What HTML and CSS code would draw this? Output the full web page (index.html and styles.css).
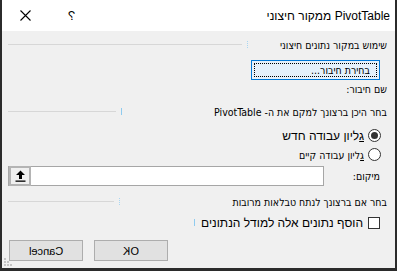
FILE: index.html
```html
<!DOCTYPE html>
<html lang="he" dir="rtl">
  <head>
    <meta charset="utf-8">
    <link rel="stylesheet" href="styles.css">
  </head>
  <body>
    <div class="window">
      <div class="titlebar">
        <span class="title">PivotTable ממקור חיצוני</span>
        <div class="title-btns">
          <span class="help">?</span>
          <svg class="close" width="11" height="11" viewBox="0 0 11 11">
            <path d="M0.5 0.5 L10.5 10.5 M10.5 0.5 L0.5 10.5" stroke="#000" stroke-width="1.1" fill="none"/>
          </svg>
        </div>
      </div>

      <div class="content">
        <div class="group">
          <div class="group-label g1"><span>שימוש במקור נתונים חיצוני</span><i class="tick dots"></i></div>
          <div class="rule"></div>
        </div>

        <div class="conn-row">
          <button class="conn-btn"><span class="focus">בחירת חיבור...</span></button>
        </div>

        <div class="conn-name">שם חיבור:</div>

        <div class="group g2-row">
          <div class="group-label g2"><span>בחר היכן ברצונך למקם את ה- PivotTable</span><i class="tick"></i></div>
          <div class="rule"></div>
        </div>

        <div class="radio-row big">
          <span class="radio checked"></span>
          <span><u>ג</u>ליון עבודה חדש</span>
        </div>
        <div class="radio-row small">
          <span class="radio"></span>
          <span><u>ג</u>ליון עבודה קיים</span>
        </div>

        <div class="loc-row">
          <span class="loc-label">מיקום:</span>
          <div class="loc-input">
            <div class="loc-btn">
              <svg width="11" height="12" viewBox="0 0 11 12">
                <path d="M5.5 0.5 L10 5 L7 5 L7 9 L4 9 L4 5 L1 5 Z" fill="#000"/>
                <rect x="0.5" y="10.5" width="10" height="1.3" fill="#000"/>
              </svg>
            </div>
          </div>
        </div>

        <div class="group g3-row">
          <div class="group-label g3"><span>בחר אם ברצונך לנתח טבלאות מרובות</span><i class="tick dots"></i></div>
          <div class="rule"></div>
        </div>

        <div class="check-row">
          <span class="checkbox"></span>
          <div class="check-label"><span>הוסף נתונים אלה למודל הנתונים</span><i class="tick"></i></div>
        </div>

        <div class="footer">
          <button class="btn"><span class="mirror">OK</span></button>
          <button class="btn"><span class="mirror">Cancel</span></button>
        </div>
      </div>

      <div class="grip">
        <svg width="9" height="9" viewBox="0 0 9 9">
          <rect x="0" y="0" width="2" height="2" fill="#c4c4c4"/>
          <rect x="0" y="3" width="2" height="2" fill="#c4c4c4"/>
          <rect x="3" y="3" width="2" height="2" fill="#c4c4c4"/>
          <rect x="0" y="6" width="2" height="2" fill="#c4c4c4"/>
          <rect x="3" y="6" width="2" height="2" fill="#c4c4c4"/>
          <rect x="6" y="6" width="2" height="2" fill="#c4c4c4"/>
        </svg>
      </div>
    </div>
  </body>
</html>
```

FILE: styles.css
```css
* {
  box-sizing: border-box;
}

body {
  margin: 0;
  font-family: "DejaVu Sans Condensed", "DejaVu Sans", sans-serif;
  font-size: 10.5px;
  color: #000;
  background: #fff;
}

.window {
  position: relative;
  width: 397px;
  height: 271px;
  background: #f0f0f0;
  border-left: 2px solid #2b2b2b;
  border-right: 2px solid #2b2b2b;
  border-bottom: 3px solid #2b2b2b;
  display: flex;
  flex-direction: column;
}

.titlebar {
  height: 31px;
  background: #fff;
  display: flex;
  align-items: center;
  justify-content: space-between;
  padding: 0 5px 0 18px;
  font-family: "Liberation Sans", sans-serif;
}

.title {
  font-size: 12px;
}

.title-btns {
  display: flex;
  align-items: center;
  gap: 37px;
}

.help {
  display: inline-block;
  transform: scaleX(-1);
  font-size: 13px;
}

.content {
  padding: 7px 8px 0 6px;
  display: flex;
  flex-direction: column;
}

/* group headers: label box on the right, rule running to the left edge */
.group {
  display: flex;
  align-items: center;
  gap: 5px;
  height: 13px;
}

.group-label {
  display: flex;
  align-items: center;
  justify-content: space-between;
  flex-shrink: 0;
}

.g1 { width: 140px; }
.g2 { width: 266px; }
.g3 { width: 268px; }

.rule {
  flex: 1;
  height: 1px;
  background: #d7d7d7;
}

.tick {
  width: 1px;
  height: 7px;
  background: #8fcbef;
}

.tick.dots {
  background: none;
  border-left: 1px dotted #a9d6f2;
}

.conn-row {
  margin-top: 9px;
  display: flex;
  padding-right: 7px;
}

.conn-btn {
  width: 129px;
  height: 20px;
  padding: 2px;
  border: 1px solid #0078d7;
  background: #e5f1fb;
  font-family: inherit;
  font-size: 10.5px;
}

.focus {
  display: block;
  height: 100%;
  border: 1px dotted #000;
  line-height: 12px;
  text-align: right;
  padding-right: 6px;
}

.conn-name {
  margin-top: 3px;
  height: 13px;
}

.g2-row {
  margin-top: 9px;
}

.radio-row {
  display: flex;
  align-items: center;
  gap: 4px;
  height: 17px;
  padding-right: 6px;
}

.radio-row.big {
  font-family: "Liberation Sans", sans-serif;
  font-size: 12px;
  margin-top: 9px;
}

.radio-row.small {
  margin-top: 2px;
}

.radio {
  width: 13px;
  height: 13px;
  border: 1px solid #333;
  border-radius: 50%;
  background: #fff;
  display: flex;
  align-items: center;
  justify-content: center;
  flex-shrink: 0;
}

.radio.checked::after {
  content: "";
  width: 7px;
  height: 7px;
  border-radius: 50%;
  background: #333;
}

.loc-row {
  display: flex;
  align-items: center;
  justify-content: space-between;
  margin-top: 3px;
  padding-right: 7px;
}

.loc-input {
  width: 316px;
  height: 20px;
  border: 1px solid #a6a6a6;
  background: #fff;
  display: flex;
  justify-content: flex-end;
}

.loc-btn {
  width: 22px;
  height: 20px;
  margin: -1px -1px -1px 0;
  border: 2px solid #b4b4b4;
  background: #f0f0f0;
  display: flex;
  align-items: center;
  justify-content: center;
}

.g3-row {
  margin-top: 9px;
}

.check-row {
  display: flex;
  align-items: center;
  gap: 5px;
  margin-top: 6px;
  height: 17px;
  padding-right: 7px;
}

.checkbox {
  width: 12px;
  height: 12px;
  border: 1px solid #333;
  background: #fff;
  flex-shrink: 0;
}

.check-label {
  width: 169px;
  display: flex;
  align-items: center;
  justify-content: space-between;
  font-family: "Liberation Sans", sans-serif;
  font-size: 12px;
}

.footer {
  margin-top: 9px;
  display: flex;
  justify-content: flex-end;
  gap: 11px;
  padding-left: 1px;
}

.btn {
  width: 74px;
  height: 21px;
  border: 1px solid #adadad;
  background: #e1e1e1;
  font-family: "Liberation Sans", sans-serif;
  font-size: 11px;
  padding: 0;
}

.mirror {
  display: inline-block;
  transform: scaleX(-1);
}

.grip {
  position: absolute;
  left: 2px;
  bottom: 1px;
  line-height: 0;
}
```
